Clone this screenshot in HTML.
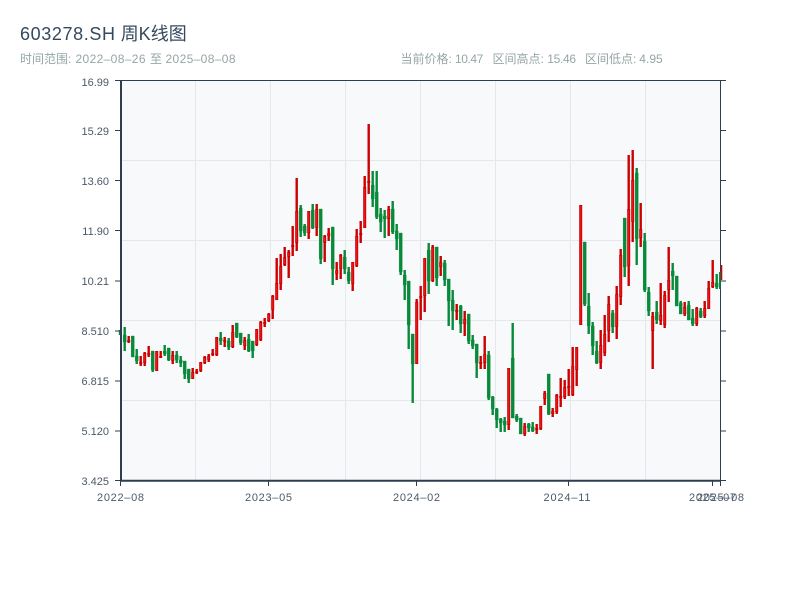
<!DOCTYPE html>
<html><head><meta charset="utf-8"><title>603278.SH 周K线图</title>
<style>
html,body{margin:0;padding:0;background:#fff;width:800px;height:600px;overflow:hidden}
svg{display:block;position:absolute;left:0;top:0}
text{font-family:"Liberation Sans","Noto Sans CJK SC",sans-serif}
</style></head><body>
<svg width="800" height="600" viewBox="0 0 800 600" xmlns="http://www.w3.org/2000/svg">
<g font-size="18" fill="#34495e">
<text x="20" y="40" textLength="95" lengthAdjust="spacing">603278.SH</text>
<text x="120.7" y="40">周K线图</text>
</g>
<g font-size="12" fill="#95a5a6">
<text x="20" y="63">时间范围:</text>
<text x="75.5" y="63" textLength="70" lengthAdjust="spacing">2022–08–26</text>
<text x="150" y="63">至</text>
<text x="165.5" y="63" textLength="70" lengthAdjust="spacing">2025–08–08</text>
<text x="400.5" y="63">当前价格:</text>
<text x="455" y="63" textLength="28.3" lengthAdjust="spacing">10.47</text>
<text x="492.5" y="63">区间高点:</text>
<text x="547.3" y="63" textLength="28.7" lengthAdjust="spacing">15.46</text>
<text x="585" y="63">区间低点:</text>
<text x="639.3" y="63" textLength="23.4" lengthAdjust="spacing">4.95</text>
</g>
<rect x="121" y="80" width="600" height="401" fill="#f8f9fb"/>
<path d="M195.5 80V481M270.5 80V481M345.5 80V481M420.5 80V481M495.5 80V481M570.5 80V481M645.5 80V481M121 160.5H721M121 240.5H721M121 320.5H721M121 400.5H721" stroke="#e4e7ec" stroke-width="1" fill="none"/>
<!-- green wicks -->
<path stroke="#078a3a" stroke-width="2.4" fill="none" d="M120 330V335M124.7 327V351M132.7 336V357M136.7 349V364M152.7 351V372M164.7 345V356M168.7 348V361M176.7 351V363M180.7 356V367M184.7 361V379M188.7 369V383M220.7 332V345M228.7 338V350M236.7 323V338M240.7 333V345M248.7 334V352M252.7 341V358M300.7 205V237M304.7 224V236M312.7 204V229M320.7 209V264M332.7 227V285M344.7 250V274M348.7 267V284M372.7 171V207M376.7 171V219M380.7 208V232M384.7 210V238M392.7 201V234M396.7 224V250M400.7 233V275M404.7 270V300M408.7 281V349M412.7 334V403M428.7 243V294M436.7 247V286M444.7 260V286M448.7 279V326M452.7 290V330M460.7 305V333M468.7 314V344M472.7 335V349M476.7 344V378M488.7 351V400M492.7 396V415M496.7 408V428M500.7 418V432M504.7 417V432M512.7 323V418M516.7 414V422M520.7 418V434M528.7 423V432M532.7 422V432M548.7 374V415M584.7 242V306M588.7 293V334M592.7 322V355M596.7 341V364M612.7 310V333M624.7 218V277M636.7 168V265M644.7 233V292M648.7 287V316M656.7 301V324M672.7 263V290M676.7 276V306M680.7 301V314M688.7 301V320M692.7 309V326M700.7 308V318M716.7 274V289"/>
<!-- green bodies -->
<path fill="#078a3a" stroke="#078a3a" stroke-width="0.4" d="M123.2 335h3v7h-3zM131.2 336h3v21h-3zM135.2 356h3v5h-3zM151.2 351h3v19h-3zM163.2 351h3v3h-3zM167.2 348h3v12h-3zM175.2 355h3v5h-3zM179.2 360h3v3h-3zM183.2 361h3v13h-3zM187.2 369h3v10h-3zM219.2 338h3v3h-3zM227.2 341h3v6h-3zM235.2 323h3v14h-3zM239.2 333h3v10h-3zM247.2 339h3v12h-3zM251.2 341h3v10h-3zM299.2 208h3v23h-3zM303.2 226h3v7h-3zM311.2 210h3v18h-3zM319.2 209h3v50h-3zM331.2 227h3v42h-3zM343.2 257h3v12h-3zM347.2 272h3v9h-3zM371.2 185h3v14h-3zM375.2 192h3v25h-3zM379.2 214h3v8h-3zM383.2 216h3v3h-3zM391.2 209h3v23h-3zM395.2 231h3v8h-3zM399.2 233h3v39h-3zM403.2 275h3v10h-3zM407.2 281h3v44h-3zM411.2 334h3v30h-3zM427.2 250h3v31h-3zM435.2 247h3v31h-3zM443.2 263h3v17h-3zM447.2 279h3v22h-3zM451.2 300h3v11h-3zM459.2 306h3v18h-3zM467.2 314h3v27h-3zM471.2 340h3v6h-3zM475.2 344h3v19h-3zM487.2 355h3v43h-3zM491.2 397h3v12h-3zM495.2 409h3v11h-3zM499.2 419h3v4h-3zM503.2 421h3v4h-3zM511.2 358h3v60h-3zM515.2 416h3v4h-3zM519.2 418h3v16h-3zM527.2 424h3v4h-3zM531.2 427h3v4h-3zM547.2 374h3v40h-3zM583.2 242h3v62h-3zM587.2 306h3v20h-3zM591.2 326h3v20h-3zM595.2 351h3v12h-3zM611.2 313h3v14h-3zM623.2 218h3v49h-3zM635.2 173h3v66h-3zM643.2 241h3v49h-3zM647.2 292h3v19h-3zM655.2 312h3v8h-3zM671.2 271h3v5h-3zM675.2 276h3v30h-3zM679.2 303h3v11h-3zM687.2 305h3v15h-3zM691.2 318h3v6h-3zM699.2 311h3v6h-3zM715.2 283h3v4h-3z"/>
<!-- red wicks -->
<path stroke="#cc0000" stroke-width="2.4" fill="none" d="M128.7 336V343M140.7 356V366M144.7 352V366M148.7 346V357M156.7 351V371M160.7 351V358M172.7 351V364M192.7 368V379M196.7 369V374M200.7 362V372M204.7 356V364M208.7 354V362M212.7 349V356M216.7 337V356M224.7 337V347M232.7 325V348M244.7 337V350M256.7 329V346M260.7 321V341M264.7 318V327M268.7 313V322M272.7 295V319M276.7 258V300M280.7 254V290M284.7 247V266M288.7 250V278M292.7 226V256M296.7 178V251M308.7 211V239M316.7 204V236M324.7 235V262M328.7 228V241M336.7 262V280M340.7 254V279M352.7 262V291M356.7 229V267M360.7 221V243M364.7 176V228M368.7 124V194M388.7 206V236M416.7 299V364M420.7 286V320M424.7 258V312M432.7 245V282M440.7 256V276M456.7 304V320M464.7 311V336M480.7 356V369M484.7 336V369M508.7 368V430M524.7 423V436M536.7 424V434M540.7 406V430M544.7 391V405M552.7 408V417M556.7 394V414M560.7 378V407M564.7 380V399M568.7 369V396M572.7 347V396M576.7 347V386M580.7 205V325M600.7 330V369M604.7 315V356M608.7 296V342M616.7 286V339M620.7 249V305M628.7 155V286M632.7 150V242M640.7 203V247M652.7 312V369M660.7 283V325M664.7 291V328M668.7 247V302M684.7 302V316M696.7 307V326M704.7 301V318M708.7 281V309M712.7 260V288"/>
<!-- red bodies -->
<path fill="#f01a20" stroke="#cc0000" stroke-width="1" d="M127.7 340.5h2v1h-2zM139.7 362.5h2v1h-2zM143.7 353.5h2v9h-2zM147.7 353.5h2v1h-2zM155.7 351.5h2v19h-2zM159.7 356.5h2v1h-2zM171.7 355.5h2v5h-2zM191.7 372.5h2v6h-2zM195.7 371.5h2v1h-2zM199.7 362.5h2v8h-2zM203.7 357.5h2v5h-2zM207.7 356.5h2v3h-2zM211.7 353.5h2v1h-2zM215.7 337.5h2v17h-2zM223.7 340.5h2v1h-2zM231.7 332.5h2v14h-2zM243.7 340.5h2v5h-2zM255.7 329.5h2v15h-2zM259.7 322.5h2v17h-2zM263.7 322.5h2v1h-2zM267.7 314.5h2v6h-2zM271.7 296.5h2v13h-2zM275.7 283.5h2v16h-2zM279.7 266.5h2v17h-2zM283.7 257.5h2v7h-2zM287.7 252.5h2v4h-2zM291.7 245.5h2v1h-2zM295.7 211.5h2v31h-2zM307.7 211.5h2v21h-2zM315.7 209.5h2v18h-2zM323.7 236.5h2v6h-2zM327.7 233.5h2v2h-2zM335.7 270.5h2v3h-2zM339.7 255.5h2v13h-2zM351.7 262.5h2v21h-2zM355.7 236.5h2v29h-2zM359.7 233.5h2v1h-2zM363.7 187.5h2v40h-2zM367.7 181.5h2v1h-2zM387.7 209.5h2v9h-2zM415.7 302.5h2v61h-2zM419.7 296.5h2v1h-2zM423.7 258.5h2v37h-2zM431.7 247.5h2v33h-2zM439.7 262.5h2v4h-2zM455.7 310.5h2v1h-2zM463.7 319.5h2v4h-2zM479.7 362.5h2v1h-2zM483.7 354.5h2v8h-2zM507.7 368.5h2v56h-2zM523.7 426.5h2v7h-2zM535.7 428.5h2v1h-2zM539.7 406.5h2v22h-2zM543.7 393.5h2v5h-2zM551.7 411.5h2v2h-2zM555.7 395.5h2v16h-2zM559.7 396.5h2v1h-2zM563.7 387.5h2v9h-2zM567.7 386.5h2v1h-2zM571.7 366.5h2v28h-2zM575.7 347.5h2v22h-2zM579.7 205.5h2v119h-2zM599.7 345.5h2v17h-2zM603.7 334.5h2v18h-2zM607.7 304.5h2v26h-2zM615.7 294.5h2v32h-2zM619.7 255.5h2v41h-2zM627.7 209.5h2v56h-2zM631.7 180.5h2v41h-2zM639.7 229.5h2v8h-2zM651.7 316.5h2v14h-2zM659.7 315.5h2v5h-2zM663.7 295.5h2v29h-2zM667.7 280.5h2v9h-2zM683.7 307.5h2v6h-2zM695.7 308.5h2v15h-2zM703.7 308.5h2v7h-2zM707.7 288.5h2v20h-2zM711.7 282.5h2v4h-2z"/>
<!-- axes -->
<path stroke="#2c3e50" fill="none" stroke-width="1" d="M115 80.5H726M115 130.5H121M115 180.5H121M115 230.5H121M115 281H121M115 331H121M115 381H121M115 431H121M720.5 80V481M720 130.5H726M720 180.5H726M720 230.5H726M720 281H726M720 331H726M720 381H726M720 431H726"/>
<path stroke="#2c3e50" fill="none" stroke-width="1" d="M120.5 481V486M268.5 481V486M416.5 481V486M568.5 481V486M712.5 481V486M720.5 481V486M115 480.5H121M720 480.5H726"/>
<path stroke="#2c3e50" fill="none" stroke-width="2" d="M121 80V481.5M120 480.8H721"/>
<!-- last candles over axis -->
<path stroke="#078a3a" stroke-width="1.6" fill="none" d="M719.8 272V289"/>
<path stroke="#cc0000" stroke-width="1.4" fill="none" d="M721.6 265V280"/>
<g font-size="11" fill="#4a5a6a" text-anchor="end">
<text x="109" y="86">16.99</text>
<text x="109" y="135">15.29</text>
<text x="109" y="185">13.60</text>
<text x="109" y="235">11.90</text>
<text x="109" y="285">10.21</text>
<text x="109" y="335">8.510</text>
<text x="109" y="385">6.815</text>
<text x="109" y="435">5.120</text>
<text x="109" y="485">3.425</text>
</g>
<g font-size="11" fill="#4a5a6a" text-anchor="middle">
<text x="120.5" y="501" textLength="47" lengthAdjust="spacing">2022–08</text>
<text x="268.5" y="501" textLength="47" lengthAdjust="spacing">2023–05</text>
<text x="416.5" y="501" textLength="47" lengthAdjust="spacing">2024–02</text>
<text x="567" y="501" textLength="47" lengthAdjust="spacing">2024–11</text>
<text x="712.5" y="501" textLength="47" lengthAdjust="spacing">2025–07</text>
<text x="720.5" y="501" textLength="47" lengthAdjust="spacing">2025–08</text>
</g>
</svg>
</body></html>
